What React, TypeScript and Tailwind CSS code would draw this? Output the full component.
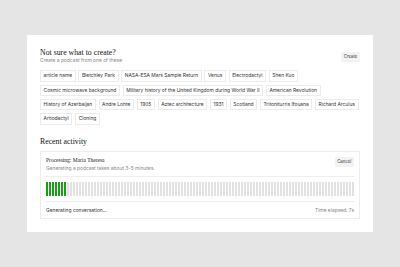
import * as React from "react"

const TAGS = [
  "article name",
  "Bletchley Park",
  "NASA-ESA Mars Sample Return",
  "Venus",
  "Electrodactyl",
  "Shen Kuo",
  "Cosmic microwave background",
  "Military history of the United Kingdom during World War II",
  "American Revolution",
  "History of Azerbaijan",
  "Andre Lohte",
  "1905",
  "Aztec architecture",
  "1931",
  "Scotland",
  "Tritoniturris Ifouana",
  "Richard Arculus",
  "Artiodactyl",
  "Cloning",
]

const BAR_COUNT = 103
const DONE = 7

export default function App() {
  return (
    <div className="w-[400px] h-[267px] bg-[#e5e5e5] flex items-center justify-center font-['Inter',sans-serif]">
      <div className="w-[346px] bg-white px-[13px] pt-[13px] pb-[13px]">
        {/* Header */}
        <div className="flex items-end justify-between">
          <div className="flex flex-col">
            <h2 className="font-['Liberation_Serif',serif] text-[7.8px] leading-[9px] text-[#111]">
              Not sure what to create?
            </h2>
            <p className="text-[4.9px] leading-[7px] text-[#888]">Create a podcast from one of these</p>
          </div>
          <button className="h-[10.5px] px-[2.7px] bg-[#f3f3f3] rounded-[1px] text-[4.3px] text-[#333] mb-[2px]">
            Create
          </button>
        </div>

        {/* Suggestions */}
        <div className="flex flex-wrap gap-x-[2.7px] gap-y-[3px] mt-[6px]">
          {TAGS.map((t) => (
            <span
              key={t}
              className="h-[11.3px] px-[2.6px] flex items-center border border-[#ececec] text-[4.9px] text-[#333] whitespace-nowrap"
            >
              {t}
            </span>
          ))}
        </div>

        {/* Recent activity */}
        <h2 className="mt-[12px] font-['Liberation_Serif',serif] text-[7.8px] leading-[9px] text-[#111]">
          Recent activity
        </h2>
        <div className="mt-[5px] border border-[#eeeeee] px-[5px] pt-[5px] pb-[4px]">
          <div className="flex items-start justify-between pb-[4px] border-b border-[#eeeeee]">
            <div className="flex flex-col">
              <span className="font-['Liberation_Serif',serif] text-[5.5px] leading-[7px] text-[#222]">
                Processing: Maria Theresa
              </span>
              <span className="text-[4.9px] leading-[8px] text-[#888]">
                Generating a podcast takes about 3-5 minutes.
              </span>
            </div>
            <button className="h-[10.5px] px-[2.7px] bg-[#f3f3f3] rounded-[1px] text-[4.3px] text-[#333]">
              Cancel
            </button>
          </div>
          <div className="flex gap-[1.5px] h-[14px] my-[5px]">
            {Array.from({ length: BAR_COUNT }).map((_, i) => (
              <div key={i} className={i < DONE ? "flex-1 bg-[#1a9e1a]" : "flex-1 bg-[#e2e2e2]"} />
            ))}
          </div>
          <div className="flex items-center justify-between pt-[4px] border-t border-[#eeeeee]">
            <span className="text-[4.9px] leading-[8px] text-[#333]">Generating conversation...</span>
            <span className="text-[4.9px] leading-[8px] text-[#888]">Time elapsed: 7s</span>
          </div>
        </div>
      </div>
    </div>
  )
}
